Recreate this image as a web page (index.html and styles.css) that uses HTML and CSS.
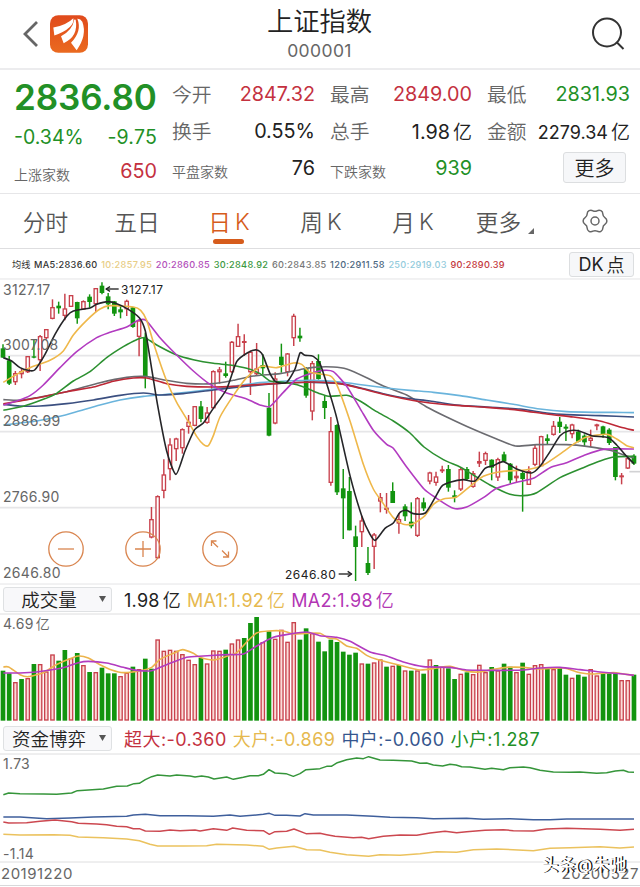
FILE: index.html
```html
<!DOCTYPE html>
<html lang="zh-CN">
<head>
    <meta charset="UTF-8">
    <title>上证指数 000001</title>
    <meta name="viewport" content="width=device-width, initial-scale=1.0">
    <link rel="stylesheet" href="styles.css">
</head>
<body>

<div class="main">
    <div class="header">
        <div class="header-left">
            <svg class="back" viewBox="0 0 16 28"><path d="M14.5 2 L2.5 14 L14.5 26"/></svg>
            <svg class="logo" viewBox="149 44 114 113">
                <defs>
                    <linearGradient id="logo-bg" x1="0" y1="0" x2="0" y2="1">
                        <stop offset="0" stop-color="#e04a1c"/>
                        <stop offset="1" stop-color="#ea6a20"/>
                    </linearGradient>
                </defs>
                <rect x="149" y="44" width="114" height="113" rx="25" fill="url(#logo-bg)"/>
                <path fill="#fff" d="M159 81 Q198 74 219 53 Q224 82 162 105 Z"/>
                <path fill="#fff" d="M222 57 Q216 90 182 107 L190 128 Q235 108 226 58 Z"/>
                <path fill="#fff" d="M231 55 Q246 92 212 127 L229 149 Q261 105 246 64 Q240 54 231 55 Z"/>
            </svg>
        </div>
        <div class="header-title">
            <div class="name">上证指数</div>
            <div class="code">000001</div>
        </div>
        <svg class="search" viewBox="0 0 34 34"><circle cx="16" cy="15.5" r="14"/><path d="M25.5 25 L32.5 32"/></svg>
    </div>

    <div class="quote">
        <div class="quote-col first">
            <div class="cell price green">2836.80</div>
            <div class="cell change green"><span>-0.34%</span><span>-9.75</span></div>
            <div class="cell count"><label>上涨家数</label><span class="red">650</span></div>
        </div>
        <div class="quote-col">
            <div class="cell"><label>今开</label><span class="red">2847.32</span></div>
            <div class="cell"><label>换手</label><span>0.55%</span></div>
            <div class="cell count"><label>平盘家数</label><span>76</span></div>
        </div>
        <div class="quote-col">
            <div class="cell"><label>最高</label><span class="red">2849.00</span></div>
            <div class="cell"><label>总手</label><span>1.98<i>亿</i></span></div>
            <div class="cell count"><label>下跌家数</label><span class="green">939</span></div>
        </div>
        <div class="quote-col">
            <div class="cell"><label>最低</label><span class="green">2831.93</span></div>
            <div class="cell amount"><label>金额</label><span>2279.34<i>亿</i></span></div>
            <div class="cell last"><div class="button more">更多</div></div>
        </div>
    </div>

    <div class="tabs">
        <div class="tab">分时</div>
        <div class="tab">五日</div>
        <div class="tab active">日<i>K</i></div>
        <div class="tab">周<i>K</i></div>
        <div class="tab">月<i>K</i></div>
        <div class="tab tab-more">更多<svg class="corner" viewBox="0 0 6 6"><path d="M6 0 V6 H0 Z"/></svg></div>
        <div class="tab tab-gear">
            <svg class="gear" viewBox="-14 -14 28 28">
                <path d="M12.8 0 Q12.8 2.3 10.65 3.6 Q8.5 4.9 8.45 7.45 Q8.4 10 6.4 11.1 Q4.4 12.2 2.2 11 Q0 9.8 -2.2 11 Q-4.4 12.2 -6.4 11.1 Q-8.4 10 -8.45 7.45 Q-8.5 4.9 -10.65 3.6 Q-12.8 2.3 -12.8 0 Q-12.8 -2.3 -10.65 -3.6 Q-8.5 -4.9 -8.45 -7.45 Q-8.4 -10 -6.4 -11.1 Q-4.4 -12.2 -2.2 -11 Q0 -9.8 2.2 -11 Q4.4 -12.2 6.4 -11.1 Q8.4 -10 8.45 -7.45 Q8.5 -4.9 10.65 -3.6 Q12.8 -2.3 12.8 0 Z"/>
                <circle r="4.3"/>
            </svg>
        </div>
    </div>

    <div class="legend">
        <span class="label">均线</span>
        <span class="ma5">MA5:2836.60</span>
        <span class="ma10">10:2857.95</span>
        <span class="ma20">20:2860.85</span>
        <span class="ma30">30:2848.92</span>
        <span class="ma60">60:2843.85</span>
        <span class="ma120">120:2911.58</span>
        <span class="ma250">250:2919.03</span>
        <span class="ma90">90:2890.39</span>
        <div class="button dk">DK<i>点</i></div>
    </div>

    <div class="chart kline">
        <svg id="kline" viewBox="0 4 1920 915"></svg>
        <span class="axis y1">3127.17</span>
        <span class="axis y2">3007.08</span>
        <span class="axis y3">2886.99</span>
        <span class="axis y4">2766.90</span>
        <span class="axis y5">2646.80</span>
        <span class="mark high">3127.17</span>
        <span class="mark low">2646.80</span>
        <div class="zoom-buttons">
            <svg viewBox="0 0 36 36"><circle cx="18" cy="18" r="17.2"/><path d="M10 18 H26"/></svg>
            <svg viewBox="0 0 36 36"><circle cx="18" cy="18" r="17.2"/><path d="M10 18 H26 M18 10 V26"/></svg>
            <svg viewBox="0 0 36 36"><circle cx="18" cy="18" r="17.2"/><path d="M9.5 15 V10 H14.5 M9.5 10 L16 16.2 M20 19.5 L26.5 26 M26.5 20.5 V26 H21"/></svg>
        </div>
    </div>

    <div class="sub-head">
        <div class="select"><span>成交量</span><svg viewBox="0 0 7 6"><path d="M0 0 H7 L3.5 6 Z"/></svg></div>
        <div class="values volume-values">
            <span>1.98<i>亿</i></span>
            <span class="yellow">MA1:1.92<i>亿</i></span>
            <span class="purple">MA2:1.98<i>亿</i></span>
        </div>
    </div>
    <div class="chart volume">
        <svg id="volume" viewBox="0 88 1920 324"></svg>
        <span class="axis top">4.69<i>亿</i></span>
    </div>

    <div class="sub-head flow-head">
        <div class="select"><span>资金博弈</span><svg viewBox="0 0 7 6"><path d="M0 0 H7 L3.5 6 Z"/></svg></div>
        <div class="values flow-values">
            <span class="red">超大:-0.360</span>
            <span class="yellow">大户:-0.869</span>
            <span class="blue">中户:-0.060</span>
            <span class="green">小户:1.287</span>
        </div>
    </div>
    <div class="chart flow">
        <svg id="flow" viewBox="0 94 1920 324"></svg>
        <span class="axis top">1.73</span>
        <span class="axis bottom">-1.14</span>
    </div>

    <div class="dates">
        <span>20191220</span>
        <span>20200527</span>
        <div class="watermark">头条@朱驰</div>
    </div>
</div>

<script src="chart.js"></script>
</body>
</html>
```
FILE: styles.css
```css
html, body {
    margin: 0;
    padding: 0;
}

body {
    background-color: #fff;
    color: #222;
    font-family: Inter, "Noto Sans CJK SC", sans-serif;
}

i {
    font-style: normal;
    font-weight: 350;
}

svg {
    display: block;
    flex: none;
}

.main {
    width: 640px;
    height: 887px;
    overflow: hidden;
    display: flex;
    flex-direction: column;
}

.main > div {
    box-sizing: border-box;
    flex: none;
}

.red { color: #c4313f; }
.green { color: #229026; }
.yellow { color: #e6b94f; }
.purple { color: #b236b4; }
.blue { color: #35568e; }

/* header */

.header {
    height: 70px;
    border-bottom: 2px solid #ececee;
    display: grid;
    grid-template-columns: 1fr 200px 1fr;
    padding: 0 15px 0 22px;
}

.header-left {
    display: flex;
    align-items: center;
    gap: 11px;
}

.back {
    width: 17px;
    height: 28px;
    fill: none;
    stroke: #666;
    stroke-width: 2.8;
}

.logo {
    width: 38px;
    height: 38px;
}

.header-title {
    text-align: center;
    margin-left: -8px;
}

.name {
    margin-top: 5px;
    font-size: 26.3px;
    line-height: 34px;
    font-weight: 350;
}

.code {
    font-size: 17.5px;
    line-height: 24px;
    color: #666;
    letter-spacing: 0.4px;
}

.search {
    width: 34px;
    height: 34px;
    justify-self: end;
    margin-top: 17px;
    fill: none;
    stroke: #333;
    stroke-width: 2;
}

/* quote */

.quote {
    height: 124px;
    border-bottom: 1px solid #e6e6e8;
    display: grid;
    grid-template-columns: 143px 143px 142px 143px;
    column-gap: 15px;
    padding: 5px 9px 0 14px;
}

.quote-col {
    display: grid;
    grid-template-columns: 100%;
    grid-template-rows: 37px 37px 37px;
}

.quote .first {
    grid-template-rows: 43px 37px 31px;
}

.cell {
    display: flex;
    align-items: center;
    justify-content: space-between;
    font-size: 19.8px;
    white-space: nowrap;
}

.change {
    font-size: 19.5px;
}

.change span + span {
    letter-spacing: 0.2px;
}

.cell label {
    color: #666;
    font-weight: 350;
}

.cell i {
    margin-left: 3px;
    font-size: 19px;
}

.count label {
    font-size: 14px;
    padding-top: 6px;
}

.price {
    font-size: 35px;
    font-weight: 600;
    letter-spacing: -0.1px;
}

.amount {
    font-size: 18px;
}

.amount label {
    font-size: 19.8px;
}

.last {
    justify-content: flex-end;
    padding-right: 4px;
}

.button {
    box-sizing: border-box;
    display: flex;
    align-items: center;
    justify-content: center;
    border: 1px solid #dcdee0;
    border-radius: 3px;
    background-color: #f6f7f9;
}

.more {
    width: 63px;
    height: 31px;
    font-size: 20px;
    font-weight: 350;
}

/* tabs */

.tabs {
    height: 55px;
    border-bottom: 1px solid #dedee0;
    display: grid;
    grid-template-columns: 91px 92px 92px 92px 92px 92px 88px;
    font-size: 22.7px;
    font-weight: 350;
    color: #555;
}

.tab {
    position: relative;
    display: flex;
    align-items: center;
    justify-content: center;
}

.tab i {
    margin-left: 4px;
}

.active {
    color: #d65c1c;
}

.active::after {
    content: "";
    position: absolute;
    left: 30px;
    bottom: 4px;
    width: 31px;
    height: 5px;
    border-radius: 3px;
    background-color: #d65c1c;
}

.tab-more {
    gap: 7px;
}

.corner {
    width: 6px;
    height: 6px;
    margin-top: 19px;
    fill: #666;
}

.gear {
    width: 26px;
    height: 26px;
    fill: none;
    stroke: #666;
    stroke-width: 1.6;
}

/* moving averages */

.legend {
    height: 30px;
    display: flex;
    align-items: center;
    gap: 3.6px;
    padding: 0 6px 0 12px;
    font-size: 9.2px;
    font-weight: 500;
    letter-spacing: 0.3px;
    white-space: nowrap;
}

.ma5, .label { color: #333; }
.ma10 { color: #e8cd85; }
.ma20 { color: #b34fba; }
.ma30 { color: #3b983e; }
.ma60 { color: #777; }
.ma120 { color: #4b6680; }
.ma250 { color: #93cbdc; }
.ma90 { color: #c4383c; }

.label {
    letter-spacing: 0;
    font-weight: 400;
}

.dk {
    width: 65px;
    height: 25px;
    margin-left: auto;
    font-size: 18px;
    font-weight: 400;
    letter-spacing: 0;
}

.dk i {
    margin-left: 3px;
}

/* charts */

.chart {
    position: relative;
}

.chart svg {
    overflow: visible;
}

.kline {
    height: 305px;
}

#kline {
    width: 640px;
    height: 305px;
}

.axis {
    position: absolute;
    left: 3px;
    font-size: 14px;
    line-height: 16px;
    letter-spacing: 0.3px;
    color: #666;
}

.axis i {
    margin-left: 2px;
}

.y1 { top: 3px; }
.y2 { top: 58px; }
.y3 { top: 134px; }
.y4 { top: 210px; }
.y5 { top: 286px; }

.mark {
    position: absolute;
    font-size: 12px;
    line-height: 14px;
    letter-spacing: 0.5px;
}

.high {
    left: 121px;
    top: 4px;
}

.low {
    left: 285px;
    top: 289px;
}

.zoom-buttons {
    position: absolute;
    left: 48px;
    top: 252px;
    display: flex;
    gap: 41px;
}

.zoom-buttons svg {
    width: 36px;
    height: 36px;
    fill: none;
    stroke: #d9854f;
    stroke-width: 1.3;
}

.sub-head {
    height: 30px;
    display: flex;
    align-items: center;
    gap: 12px;
    padding-left: 3px;
}

.select {
    box-sizing: border-box;
    width: 109px;
    height: 25px;
    display: flex;
    align-items: center;
    border: 1px solid #dfe1e3;
    border-radius: 3px;
    background-color: #f8f8fa;
    font-size: 18.5px;
    font-weight: 350;
}

.select span {
    width: 90px;
    text-align: center;
}

.select svg {
    width: 7px;
    height: 6px;
    margin-left: 5px;
    fill: #555;
}

.values {
    display: flex;
    gap: 6px;
    font-size: 18px;
    letter-spacing: 0.25px;
    white-space: nowrap;
}

.values i {
    margin-left: 3px;
}

.volume {
    height: 108px;
}

#volume, #flow {
    width: 640px;
    height: 108px;
}

.flow-head {
    height: 32px;
}

.flow-values {
    letter-spacing: 0.45px;
}

.flow {
    height: 108px;
}

.top {
    top: 2px;
}

.flow .bottom {
    top: 92px;
}

.dates {
    position: relative;
    height: 24px;
    border-bottom: 1px solid #d8d8da;
    display: flex;
    justify-content: space-between;
    padding: 2px 1px 0;
    font-size: 15px;
    line-height: 20px;
    letter-spacing: 0.5px;
    color: #666;
}

.watermark {
    position: absolute;
    right: 14px;
    top: -7px;
    font-size: 17px;
    line-height: 20px;
    letter-spacing: 0;
    font-weight: 500;
    color: #fff;
    text-shadow: 1.5px 0 0 #111;
}
```
FILE: chart.js
```js
var RED = '#c8414c', GREEN = '#12940f';
var STEP = 18.558, START = 9;

// high, body top, body bottom, low (g = falling, r = rising)
var candles = [
    'g200,212,240,240', 'g235,248,318,322', 'r280,286,314,322', 'r272,280,290,302', 'r235,235,284,286',
    'g185,236,240,242', 'r172,175,248,280', 'r154,154,182,185', 'r65,88,124,125', 'g72,84,92,108',
    'r48,92,115,128', 'r52,52,88,88', 'g72,73,122,138', 'r68,70,96,96', 'g50,57,73,90',
    'r31,31,80,103', 'g14,24,46,50', 'g46,56,80,95', 'g70,71,108,115', 'g83,95,104,122',
    'r66,69,95,115', 'g88,89,148,150', 'r125,128,178,236', 'g165,180,296,332', 'r688,724,780,782',
    'r653,655,842,842', 'r545,590,640,662', 'r482,500,575,608', 'r480,482,515,550', 'r452,454,512,528',
    'r412,432,448,468', 'r385,385,445,446', 'g370,386,424,434', 'r388,404,436,438', 'r278,280,392,392',
    'r268,275,284,318', 'g252,287,295,300', 'r190,192,284,286', 'r138,175,208,208', 'r170,190,196,235',
    'r218,222,284,352', 'r196,272,290,292', 'g230,262,272,290', 'g346,390,474,476', 'r284,302,438,440',
    'g198,237,262,285', 'r226,227,284,296', 'r108,114,182,205', 'g150,174,182,192', 'g268,272,354,360',
    'r250,256,402,428', 'g230,250,304,306', 'g352,370,391,424', 'r418,460,616,624', 'g440,442,644,652',
    'g574,632,662,784', 'g598,640,758,758', 'g744,776,808,910', 'r714,728,764,808', 'g808,856,886,892',
    'r766,770,808,874', 'r646,658,672,704', 'r646,690,697,708', 'g614,640,676,676', 'r706,724,738,768',
    'g680,686,716,730', 'g674,732,746,752', 'r658,661,775,778', 'g660,674,692,700', 'r582,584,612,620',
    'r582,596,616,624', 'r564,575,581,586', 'g562,574,630,642', 'g638,653,660,674', 'r568,574,636,640',
    'g568,574,604,608', 'r580,586,628,630', 'r522,550,558,568', 'r522,526,550,562', 'g545,546,570,608',
    'r540,544,600,610', 'g522,530,552,553', 'g556,558,608,618', 'r564,594,602,614', 'g582,586,604,702',
    'r566,580,622,622', 'r500,510,562,566', 'r474,475,566,566', 'g470,482,490,502', 'r430,444,472,474',
    'g418,432,448,466', 'g440,447,453,490', 'r438,440,470,482', 'g456,462,492,494', 'g470,474,494,506',
    'r456,480,490,508', 'r438,440,446,458', 'g444,446,470,480', 'g452,456,496,502', 'g508,508,598,608',
    'r586,593,599,620', 'r540,541,573,574', 'g530,534,558,562'
];

var averages = [
    ['#6b6b70', '10,366 60,368 110,360 200,342 300,315 380,299 435,296 500,308 560,317 640,318 700,308 760,295 840,288 900,276 940,269 1000,268 1040,274 1100,300 1150,325 1220,352 1280,388 1340,418 1420,455 1490,484 1546,505 1610,501 1700,501 1760,506 1830,518 1880,535 1902,540'],
    ['#6ab4dc', '10,442 60,436 110,430 180,416 240,399 300,382 360,367 430,356 480,352 560,344 640,334 700,326 780,315 860,310 940,308 1020,313 1090,322 1160,331 1230,338 1300,344 1380,354 1460,367 1540,380 1620,394 1700,402 1780,404 1840,404 1902,405'],
    ['#3b4f80', '10,380 60,385 120,385 200,378 280,367 360,353 430,346 480,352 550,348 640,337 700,330 780,322 860,316 940,314 1020,318 1080,330 1150,348 1220,362 1290,370 1370,382 1460,388 1560,394 1640,406 1700,411 1800,414 1902,418'],
    ['#bd2836', '10,378 60,370 110,361 200,342 280,328 340,311 400,301 440,301 500,318 560,326 640,328 700,326 780,320 860,316 940,313 1020,318 1080,332 1150,350 1220,365 1290,376 1380,384 1460,389 1560,398 1640,409 1720,418 1800,430 1860,448 1902,458'],
    ['#2c9030', '10,398 70,386 130,365 170,347 220,310 270,282 320,240 370,207 410,186 435,180 470,202 530,232 580,246 640,257 690,262 740,272 780,288 810,310 850,314 900,324 960,348 990,356 1040,353 1080,370 1130,402 1180,430 1230,466 1272,508 1330,546 1380,568 1420,592 1470,622 1530,650 1570,654 1610,645 1680,600 1750,570 1800,550 1840,538 1902,536'],
    ['#b23bc0', '10,382 50,370 90,354 130,322 180,270 230,222 290,180 330,164 380,148 415,128 438,128 480,180 530,232 580,280 630,320 680,346 740,364 780,382 810,386 850,344 890,304 930,288 970,278 1000,282 1040,326 1080,392 1120,458 1160,500 1180,512 1220,568 1272,634 1310,662 1360,692 1400,688 1450,660 1490,632 1550,614 1600,602 1650,570 1700,555 1750,534 1810,515 1902,514'],
    ['#efb84a', '10,314 50,290 90,270 150,248 190,220 220,172 260,128 300,94 330,84 400,88 422,98 440,128 465,210 500,310 530,374 565,432 590,476 610,500 625,504 640,474 660,418 700,354 740,300 785,266 830,270 880,256 905,260 930,284 990,294 1010,320 1050,430 1090,560 1120,634 1150,678 1180,720 1210,740 1240,738 1275,714 1300,680 1330,664 1370,658 1410,626 1450,596 1500,582 1580,576 1630,562 1690,522 1720,500 1760,478 1820,470 1850,484 1880,504 1902,510'],
    ['#252528', '10,240 35,250 60,270 84,278 104,277 135,230 165,170 200,116 220,100 270,91 290,80 325,72 350,78 380,92 418,120 436,160 450,242 472,378 500,520 528,590 555,520 584,456 610,436 640,392 680,334 710,252 745,224 770,217 788,232 810,288 830,314 860,314 885,274 900,226 915,233 940,236 960,258 985,334 1010,420 1050,594 1085,714 1110,770 1126,788 1155,752 1180,736 1200,704 1220,698 1240,708 1276,706 1305,660 1325,626 1350,614 1390,606 1425,610 1455,572 1480,564 1510,552 1550,574 1595,586 1620,566 1650,522 1680,474 1705,460 1735,459 1775,474 1825,480 1850,502 1880,536 1902,558']
];

var volumes = [
    'g258', 'g266', 'r292', 'g283', 'r280', 'g238', 'r238', 'r260', 'r209', 'g228', 'g196', 'r220', 'g205', 'r241', 'g262',
    'r262', 'g249', 'g266', 'g266', 'r274', 'r264', 'g246', 'r253', 'g222', 'g252', 'r164', 'r198', 'r195', 'r198', 'r208',
    'r225', 'r238', 'g220', 'r236', 'r197', 'r198', 'g195', 'r176', 'r164', 'g160', 'g115', 'g97', 'r172', 'g140', 'r162',
    'r135', 'r171', 'r112', 'g165', 'g131', 'r145', 'g171', 'g200', 'g165', 'g172', 'g201', 'g210', 'g204', 'r236', 'g237',
    'r233', 'r224', 'g246', 'r243', 'g241', 'r257', 'g258', 'r257', 'g267', 'r224', 'g241', 'r246', 'g251', 'g283', 'r267',
    'g263', 'r268', 'r240', 'r262', 'g247', 'r257', 'g237', 'g246', 'r262', 'g234', 'r267', 'r241', 'r238', 'g248', 'r253',
    'g247', 'g270', 'r279', 'g270', 'g276', 'r253', 'r272', 'g268', 'g265', 'g266', 'r286', 'r286', 'g270'
];

var volumeLines = [
    ['#ecb44c', '10,247 26,247 60,270 85,276 130,264 165,242 200,226 235,214 265,220 300,240 335,256 370,264 420,258 455,248 480,224 520,206 548,195 580,206 600,218 640,226 680,215 710,204 740,172 770,145 805,139 850,139 880,148 920,146 960,146 985,160 1010,163 1040,184 1070,191 1100,212 1130,224 1200,242 1260,256 1310,250 1350,245 1400,260 1440,262 1480,254 1520,248 1570,248 1620,253 1690,250 1740,264 1780,268 1840,264 1870,268 1902,272'],
    ['#b23bc0', '10,265 60,265 110,262 165,254 200,246 235,234 265,230 320,235 370,248 410,257 455,258 500,240 560,218 610,214 680,210 730,208 770,184 820,158 870,148 920,142 960,153 1010,158 1050,170 1110,202 1160,214 1210,232 1270,246 1350,248 1400,256 1460,257 1520,257 1570,256 1620,250 1680,248 1740,255 1800,262 1870,268 1902,272']
];

var flows = [
    ['#35953a', '10,216 26,211 60,213 130,214 170,215 215,211 232,204 310,199 350,191 382,190 402,183 418,182 436,171 455,162 473,157 510,160 530,157 570,160 585,163 605,160 625,163 642,169 680,163 700,170 730,164 750,159 775,159 790,155 807,141 825,151 858,153 880,161 900,153 918,141 960,138 980,131 994,131 1012,120 1040,111 1070,106 1090,108 1106,102 1140,112 1180,113 1235,115 1260,122 1280,121 1300,127 1328,130 1350,125 1368,127 1385,132 1410,133 1455,140 1475,137 1510,141 1530,135 1570,133 1590,135 1620,143 1660,148 1710,149 1740,148 1790,152 1820,150 1846,145 1870,143 1885,148 1902,149'],
    ['#3f5f9c', '10,283 60,283 140,288 210,286 280,283 380,281 400,277 436,275 480,279 560,279 640,281 690,277 720,281 790,275 808,272 825,278 860,278 900,280 915,273 940,277 1040,277 1120,281 1170,284 1250,285 1300,288 1400,287 1450,290 1530,288 1600,291 1650,291 1700,289 1902,289'],
    ['#cc4850', '10,298 26,301 80,300 120,296 165,292 215,297 235,302 290,304 320,306 350,311 380,312 400,318 418,318 436,325 480,326 510,322 540,324 585,322 600,325 640,318 680,323 698,316 740,323 790,324 808,335 825,327 860,326 882,319 918,333 960,332 980,336 1005,341 1060,345 1085,344 1106,348 1150,341 1200,337 1250,338 1290,331 1335,326 1370,330 1400,327 1455,323 1510,321 1540,324 1600,325 1640,319 1700,317 1800,320 1860,323 1902,320'],
    ['#ebc25e', '10,335 60,337 160,336 210,338 235,343 310,345 380,349 418,354 450,365 473,370 550,370 620,369 650,365 740,367 790,371 808,380 830,376 882,371 920,381 960,382 990,389 1040,396 1106,401 1140,396 1200,398 1260,393 1310,387 1370,389 1420,381 1490,379 1600,384 1650,377 1710,375 1800,372 1860,376 1902,373']
];

function line(color, points, width) {
    return '<polyline fill="none" stroke="' + color + '" stroke-width="' + width + '" stroke-linejoin="round" points="' + points + '"/>';
}

// Catmull-Rom spline through the points
function curve(color, text) {
    var p = text.split(' ').map(function (s) { return s.split(',').map(Number); });
    var d = 'M' + p[0];

    for (var i = 0; i < p.length - 1; i++) {
        var a = p[i - 1] || p[i], b = p[i], c = p[i + 1], e = p[i + 2] || c;
        d += ' C' + [b[0] + (c[0] - a[0]) / 9, b[1] + (c[1] - a[1]) / 9,
            c[0] - (e[0] - b[0]) / 9, c[1] - (e[1] - b[1]) / 9, c[0], c[1]].join(',');
    }
    return '<path fill="none" stroke="' + color + '" stroke-width="4.8" d="' + d + '"/>';
}

function grid(ys, color, width) {
    return ys.map(function (y) { return line(color, '0,' + y + ' 1920,' + y, width); }).join('');
}

function bar(x, top, bottom, type, width, fill) {
    if (type == 'g') {
        return '<rect x="' + (x - width / 2) + '" y="' + top + '" width="' + width + '" height="' + (bottom - top) + '" fill="' + GREEN + '"/>';
    }
    return '<rect x="' + (x - width / 2 + 2) + '" y="' + (top + 2) + '" width="' + (width - 4) + '" height="' + Math.max(bottom - top - 4, 1) +
        '" fill="' + fill + '" stroke="' + RED + '" stroke-width="4"/>';
}

function drawKline() {
    var html = grid([4, 919], '#e4e4e6', 3) + grid([234, 462, 690], '#e6e6e8', 5);
    html += line('#d2d2d4', '1888,582 1920,582', 5);

    candles.forEach(function (text, i) {
        var x = START + STEP * i;
        var type = text[0];
        var v = text.slice(1).split(',').map(Number);

        html += line(type == 'g' ? GREEN : RED, x + ',' + v[0] + ' ' + x + ',' + v[3], 4.4);
        html += bar(x, v[1], v[2], type, 14, '#fff');
    });
    averages.forEach(function (a) { html += curve(a[0], a[1]); });

    html += line('#222', '318,34 356,34', 4) + line('#222', '330,27 318,34 330,41', 4);
    html += line('#222', '1016,889 1054,889', 4) + line('#222', '1043,881 1055,889 1043,897', 4);
    document.getElementById('kline').innerHTML = html;
}

function drawVolume() {
    var html = grid([88], '#dededf', 3);

    volumes.forEach(function (text, i) {
        html += bar(START + STEP * i, Number(text.slice(1)), 408, text[0], 14, '#fbdcd8');
    });
    volumeLines.forEach(function (a) { html += curve(a[0], a[1]); });
    document.getElementById('volume').innerHTML = html;
}

function drawFlow() {
    var html = grid([94, 418], '#dededf', 3);

    flows.forEach(function (a) { html += line(a[0], a[1], 4.5); });
    document.getElementById('flow').innerHTML = html;
}

drawKline();
drawVolume();
drawFlow();
```
